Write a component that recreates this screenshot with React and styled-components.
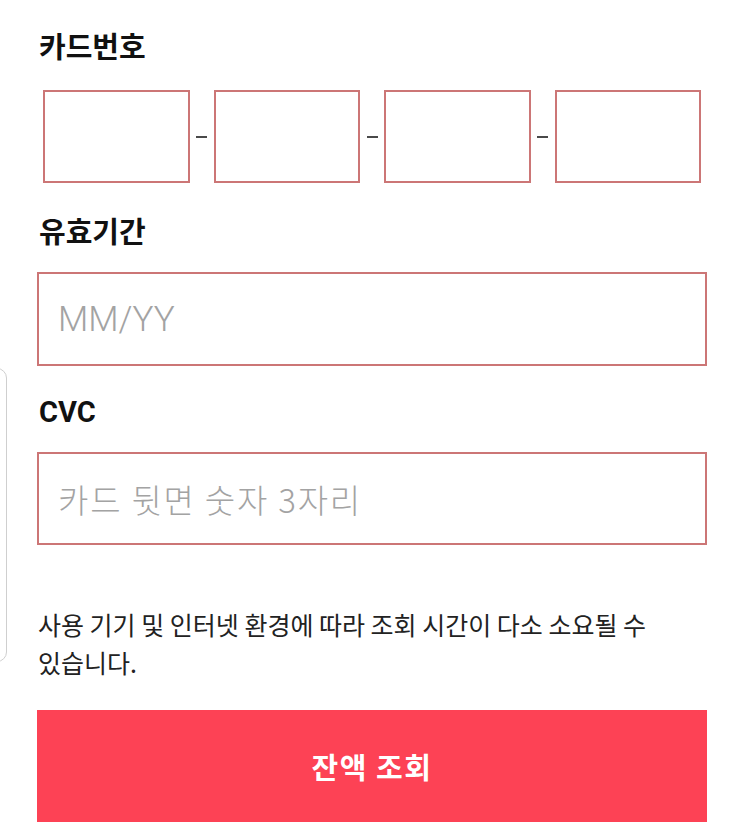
import React from "react";
import styled, { createGlobalStyle } from "styled-components";

const Global = createGlobalStyle`
  html, body { margin: 0; padding: 0; background: #fff; }
  body { font-family: "Roboto", "Noto Sans CJK KR", sans-serif; }
  * { box-sizing: border-box; }
`;

const Page = styled.div`
  position: relative;
  width: 743px;
  height: 838px;
  overflow: hidden;
  padding: 31px 36px 0 37px;
  display: flex;
  flex-direction: column;
`;

const SideCard = styled.div`
  position: absolute;
  left: -20px;
  top: 368px;
  width: 27px;
  height: 294px;
  border: 1.5px solid #cfcfcf;
  border-radius: 10px;
`;

const Field = styled.section`
  display: flex;
  flex-direction: column;
  margin-top: ${(p) => p.$top || 0}px;
`;

const Label = styled.h2`
  margin: 0 0 ${(p) => p.$gap || 24}px 2px;
  font-family: "Roboto", "Noto Sans CJK KR", sans-serif;
  font-size: 29px;
  line-height: 34px;
  font-weight: 700;
  color: #111;
  letter-spacing: 0;
`;

const CardRow = styled.div`
  display: flex;
  align-items: center;
  padding: 0 6px;
`;

const CardBox = styled.div`
  flex: 1;
  height: 93px;
  border: 2px solid #cc7676;
`;

const Dash = styled.span`
  flex: 0 0 24px;
  display: flex;
  justify-content: center;
  &::before {
    content: "";
    width: 11px;
    height: 2px;
    background: #4a4a4a;
  }
`;

const Input = styled.div`
  height: ${(p) => p.$h || 94}px;
  border: 2px solid #cc7676;
  display: flex;
  align-items: center;
  padding-left: 19px;
  color: #a3a3a3;
  font-family: ${(p) => (p.$latin ? '"Roboto", sans-serif' : '"Noto Sans CJK KR", sans-serif')};
  font-size: ${(p) => p.$size}px;
  font-weight: 300;
  letter-spacing: ${(p) => (p.$latin ? 0 : 1.8)}px;
`;

const Notice = styled.p`
  margin: 60px 0 0 1px;
  font-family: "Noto Sans CJK KR", sans-serif;
  font-size: 25px;
  line-height: 38px;
  color: #222;
  width: 660px;
  letter-spacing: 0;
  word-break: keep-all;
`;

const Submit = styled.button`
  margin-top: 29px;
  height: 112px;
  border: none;
  background: #fd4255;
  color: #fff;
  font-family: "Noto Sans CJK KR", sans-serif;
  font-size: 29px;
  font-weight: 700;
  letter-spacing: 1.5px;
  cursor: pointer;
`;

export default function App() {
  return (
    <>
      <Global />
      <Page>
        <SideCard />
        <Field>
          <Label $gap={25}>카드번호</Label>
          <CardRow>
            <CardBox />
            <Dash />
            <CardBox />
            <Dash />
            <CardBox />
            <Dash />
            <CardBox />
          </CardRow>
        </Field>
        <Field $top={33}>
          <Label $gap={22}>유효기간</Label>
          <Input $latin $size={35}>MM/YY</Input>
        </Field>
        <Field $top={29}>
          <Label $gap={23}>CVC</Label>
          <Input $h={93} $size={33}>카드 뒷면 숫자 3자리</Input>
        </Field>
        <Notice>사용 기기 및 인터넷 환경에 따라 조회 시간이 다소 소요될 수 있습니다.</Notice>
        <Submit>잔액 조회</Submit>
      </Page>
    </>
  );
}
